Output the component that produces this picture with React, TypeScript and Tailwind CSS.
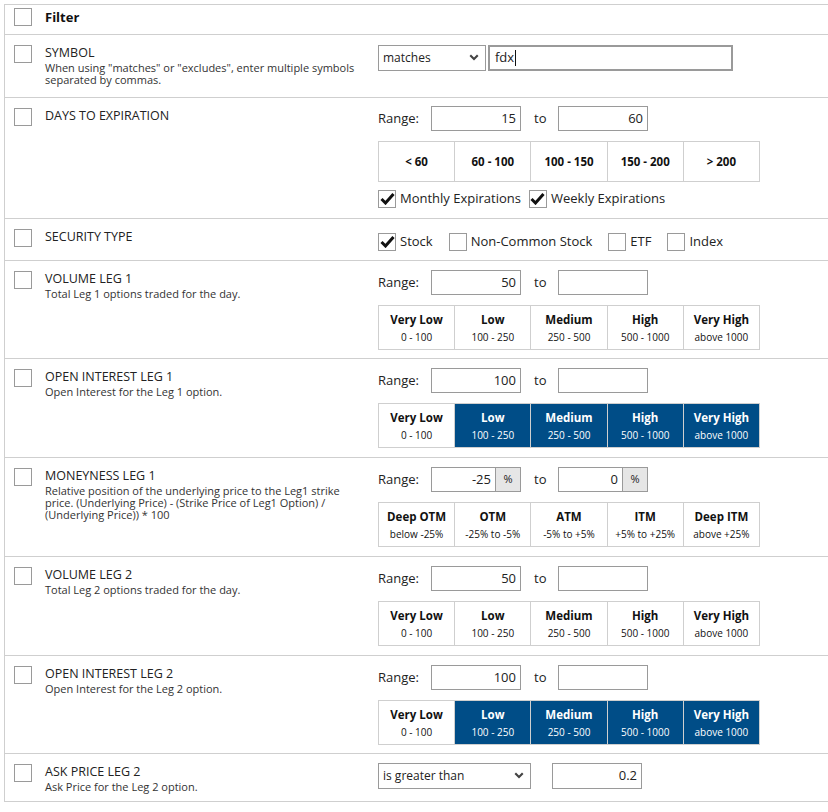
import React from 'react';

type Cell = { top: string; sub?: string; on?: boolean };

const FONT = { fontFamily: '"Open Sans", "Noto Sans", sans-serif' };

const Check: React.FC<{ checked?: boolean }> = ({ checked }) => (
    <span className="flex h-[18px] w-[18px] shrink-0 items-center justify-center border border-[#9a9a9a] bg-white">
        {checked && (
            <svg width="15" height="13" viewBox="0 0 15 13">
                <path d="M1.5 7 L5.5 11 L13.5 2" fill="none" stroke="#111" strokeWidth="3" strokeLinejoin="miter" />
            </svg>
        )}
    </span>
);

const Chevron = () => (
    <svg width="10" height="8" viewBox="0 0 10 8">
        <path d="M0.5 2 L2 0.5 L5 3.5 L8 0.5 L9.5 2 L5 6.5 Z" fill="#444" />
    </svg>
);

const Box: React.FC<{ value?: string; pct?: boolean }> = ({ value, pct }) => (
    <div className="flex h-[25px] w-[90px] border border-[#9a9a9a] bg-white">
        <div className="flex flex-1 items-center justify-end pr-[4px] text-[13px] text-[#222]">{value}</div>
        {pct && (
            <div className="flex w-[25px] items-center justify-center border-l border-[#9a9a9a] bg-[#e6e6e6] text-[11px] text-[#222]">%</div>
        )}
    </div>
);

const RangeLine: React.FC<{ from?: string; to?: string; pct?: boolean }> = ({ from, to, pct }) => (
    <div className="flex items-center">
        <span className="w-[53px] text-[13px] text-[#222]">Range:</span>
        <Box value={from} pct={pct} />
        <span className="w-[37px] pl-[13px] text-[13px] text-[#222]">to</span>
        <Box value={to} pct={pct} />
    </div>
);

const Buckets: React.FC<{ cells: Cell[]; tall?: boolean }> = ({ cells, tall }) => (
    <div className="mt-[10px] grid w-[382px] grid-cols-5 border-t border-l border-[#cfcfcf]">
        {cells.map((c) => (
            <div
                key={c.top}
                className={`flex flex-col items-center justify-center border-r border-b border-[#cfcfcf] ${tall ? 'h-[40px]' : 'h-[44px]'} ${c.on ? 'bg-[#004d87] text-white' : 'bg-white text-[#111]'}`}
            >
                <span className="text-[11.5px] font-bold leading-[14px]">{c.top}</span>
                {c.sub && <span className="mt-[4px] text-[10px] leading-[12px]">{c.sub}</span>}
            </div>
        ))}
    </div>
);

const Row: React.FC<{ title: string; desc?: string; h: string; children?: React.ReactNode }> = ({ title, desc, h, children }) => (
    <div className={`flex border-b border-[#cfcfcf] pt-[9px] ${h}`}>
        <div className="w-[9px]" />
        <div className="pt-[1px]"><Check /></div>
        <div className="w-[13px]" />
        <div className="w-[333px]">
            <div className="text-[12.5px] leading-[17px] text-[#222]">{title}</div>
            {desc && <div className="mt-[1px] max-w-[318px] text-[11px] leading-[12px] text-[#333]">{desc}</div>}
        </div>
        <div className="flex-1">{children}</div>
    </div>
);

const volume: Cell[] = [
    { top: 'Very Low', sub: '0 - 100' },
    { top: 'Low', sub: '100 - 250' },
    { top: 'Medium', sub: '250 - 500' },
    { top: 'High', sub: '500 - 1000' },
    { top: 'Very High', sub: 'above 1000' },
];

const interest: Cell[] = volume.map((c, i) => ({ ...c, on: i > 0 }));

const money: Cell[] = [
    { top: 'Deep OTM', sub: 'below -25%' },
    { top: 'OTM', sub: '-25% to -5%' },
    { top: 'ATM', sub: '-5% to +5%' },
    { top: 'ITM', sub: '+5% to +25%' },
    { top: 'Deep ITM', sub: 'above +25%' },
];

const days: Cell[] = [{ top: '< 60' }, { top: '60 - 100' }, { top: '100 - 150' }, { top: '150 - 200' }, { top: '> 200' }];

const Opt: React.FC<{ label: string; checked?: boolean }> = ({ label, checked }) => (
    <span className="flex items-center gap-[4px] text-[13px] text-[#222]">
        <Check checked={checked} />
        {label}
    </span>
);

export default function App() {
    return (
        <div className="min-h-[812px] bg-white pt-[4px] pl-[4px]" style={FONT}>
            <div className="border-t border-l border-[#cfcfcf]">
                <div className="flex h-[30px] items-start border-b border-[#cfcfcf] pt-[3px]">
                    <div className="w-[9px]" />
                    <Check />
                    <span className="ml-[13px] text-[13px] font-bold leading-[18px] text-[#111]">Filter</span>
                </div>

                <Row title="SYMBOL" desc={'When using "matches" or "excludes", enter multiple symbols separated by commas.'} h="h-[63px]">
                    <div className="flex items-center pt-[1px]">
                        <div className="flex h-[26px] w-[108px] items-center justify-between border border-[#9a9a9a] bg-white pr-[6px] pl-[4px] text-[12px] text-[#222]">
                            matches
                            <Chevron />
                        </div>
                        <div className="ml-[2px] flex h-[26px] w-[245px] items-center border-2 border-[#9a9a9a] bg-white pl-[5px] text-[13px] text-[#222]">
                            fdx<span className="ml-[1px] h-[16px] w-px bg-[#111]" />
                        </div>
                    </div>
                </Row>

                <Row title="DAYS TO EXPIRATION" h="h-[121px]">
                    <div className="-mt-[1px]">
                        <RangeLine from="15" to="60" />
                    </div>
                    <Buckets cells={days} tall />
                    <div className="mt-[7px] flex gap-[8px]">
                        <Opt label="Monthly Expirations" checked />
                        <Opt label="Weekly Expirations" checked />
                    </div>
                </Row>

                <Row title="SECURITY TYPE" h="h-[42px]">
                    <div className="flex gap-[16px] pt-[4px]">
                        <Opt label="Stock" checked />
                        <Opt label="Non-Common Stock" />
                        <Opt label="ETF" />
                        <Opt label="Index" />
                    </div>
                </Row>

                <Row title="VOLUME LEG 1" desc="Total Leg 1 options traded for the day." h="h-[98px]">
                    <RangeLine from="50" />
                    <Buckets cells={volume} />
                </Row>

                <Row title="OPEN INTEREST LEG 1" desc="Open Interest for the Leg 1 option." h="h-[99px]">
                    <RangeLine from="100" />
                    <Buckets cells={interest} />
                </Row>

                <Row
                    title="MONEYNESS LEG 1"
                    desc="Relative position of the underlying price to the Leg1 strike price. (Underlying Price) - (Strike Price of Leg1 Option) / (Underlying Price)) * 100"
                    h="h-[99px]"
                >
                    <RangeLine from="-25" to="0" pct />
                    <Buckets cells={money} />
                </Row>

                <Row title="VOLUME LEG 2" desc="Total Leg 2 options traded for the day." h="h-[99px]">
                    <RangeLine from="50" />
                    <Buckets cells={volume} />
                </Row>

                <Row title="OPEN INTEREST LEG 2" desc="Open Interest for the Leg 2 option." h="h-[98px]">
                    <RangeLine from="100" />
                    <Buckets cells={interest} />
                </Row>

                <Row title="ASK PRICE LEG 2" desc="Ask Price for the Leg 2 option." h="h-[48px]">
                    <div className="flex items-center">
                        <div className="flex h-[26px] w-[153px] items-center justify-between border border-[#9a9a9a] bg-white pr-[6px] pl-[4px] text-[12px] text-[#222]">
                            is greater than
                            <Chevron />
                        </div>
                        <div className="ml-[21px] flex h-[26px] w-[90px] items-center justify-end border border-[#9a9a9a] bg-white pr-[4px] text-[13px] text-[#222]">
                            0.2
                        </div>
                    </div>
                </Row>
            </div>
        </div>
    );
}
